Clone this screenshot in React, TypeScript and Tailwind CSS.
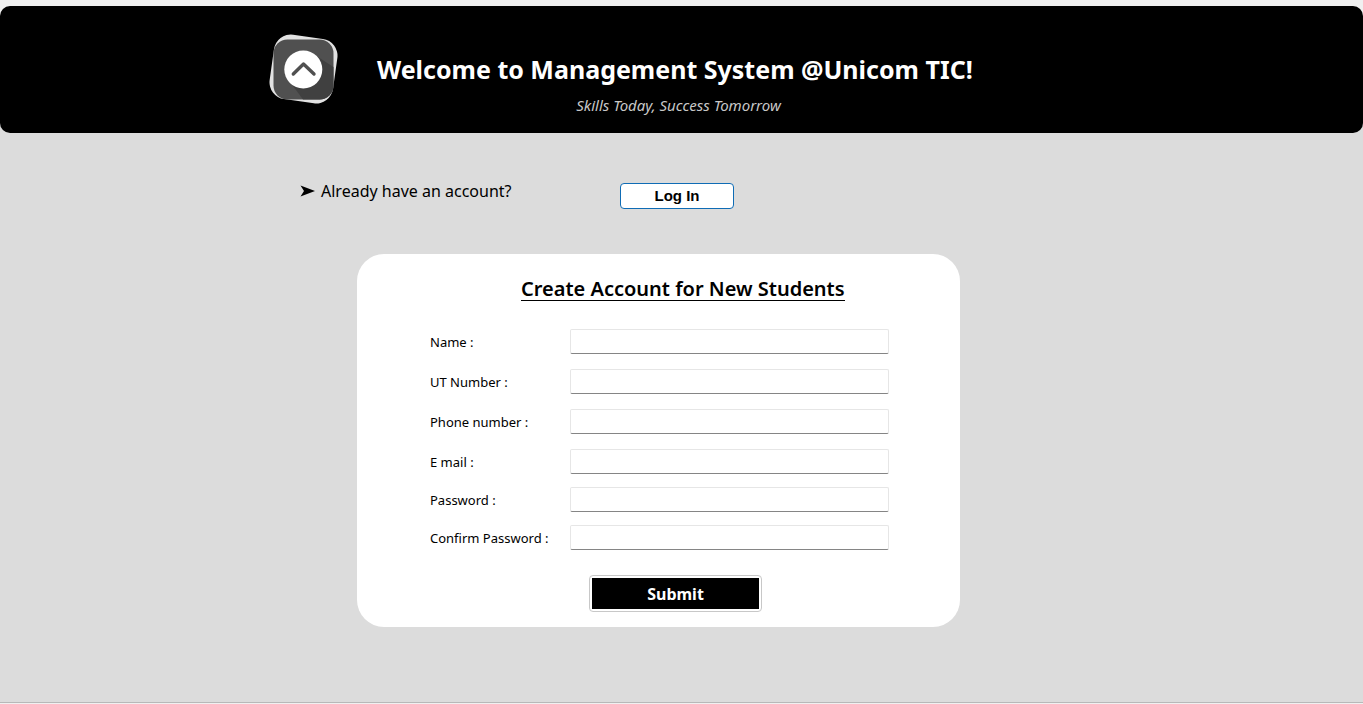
import React from "react";

type Field = { id: string; label: string; type: string };

const details: Field[] = [
  { id: "name", label: "Name :", type: "text" },
  { id: "ut-number", label: "UT Number :", type: "text" },
  { id: "phone", label: "Phone number :", type: "tel" },
  { id: "email", label: "E mail :", type: "email" },
];

const credentials: Field[] = [
  { id: "password", label: "Password :", type: "password" },
  { id: "confirm-password", label: "Confirm Password :", type: "password" },
];

function Logo() {
  return (
    <svg className="h-[70px] w-[70px] shrink-0" viewBox="0 0 70 70" aria-hidden="true">
      <rect x="2.500" y="2.500" width="64" height="65" rx="17" fill="#e2e2e2" transform="rotate(8 34.5 35)" />
      <rect x="4.500" y="5.500" width="60" height="60" rx="14" fill="#505050" />
      <path d="M47.500 22 L64.500 33 V51.500 A14 14 0 0 1 50.500 65.500 H34 L21 48 Z" fill="#404040" />
      <circle cx="34.300" cy="35.500" r="19" fill="#fff" />
      <path d="M24.300 40 L34.500 30 L45 40" fill="none" stroke="#505050" strokeWidth="3.400" strokeLinecap="round" strokeLinejoin="round" />
    </svg>
  );
}

function FieldRow({ field }: { field: Field }) {
  return (
    <div className="flex items-center">
      <label htmlFor={field.id} className="w-[140px] shrink-0 text-[13px] leading-5">
        {field.label}
      </label>
      <input
        id={field.id}
        type={field.type}
        className="h-[25px] min-w-0 flex-1 rounded-[2px] border border-[#e6e6e6] border-b-[#858585] bg-white px-1 text-[13px] outline-none"
      />
    </div>
  );
}

export default function App() {
  return (
    <div className="flex min-h-screen flex-col bg-[#f0f0f0] pt-1.5 font-['Noto_Sans','Open_Sans',sans-serif] text-black">
      <div className="mb-px flex flex-1 flex-col border-b border-[#b8b8b8] bg-[#dcdcdc]">
        <div className="bg-[linear-gradient(#f0f0f0_50%,#dcdcdc_50%)]">
          <header className="rounded-[10px] bg-black pt-7 pb-[18px]">
            <div className="mx-auto flex max-w-[825px] items-start">
              <Logo />
              <div className="ml-[38px] flex w-[603px] flex-col pt-5">
                <h1 className="text-[25px] leading-[30px] font-bold whitespace-nowrap text-white">
                  Welcome to Management System @Unicom TIC!
                </h1>
                <p className="mt-[11px] text-center text-[15px] leading-5 text-[#c8c8c8] italic">
                  Skills Today, Success Tomorrow
                </p>
              </div>
            </div>
          </header>
        </div>

        <main className="mx-auto w-full max-w-[825px] pt-[47px] pb-10">
          <div className="flex items-start pl-[31px]">
            <p className="flex w-[320px] items-center gap-1.5 text-[16px] leading-[22px]">
              <svg className="h-3 w-[15px]" viewBox="0 0 15 12" aria-hidden="true">
                <path d="M0.500 0.500 L15 6 L0.500 11.500 L4 6 Z" fill="#000" />
              </svg>
              Already have an account?
            </p>
            <button
              type="button"
              className="mt-[3px] h-[26px] w-[114px] rounded-[4px] border border-[#0f6cb5] bg-white text-[15px] leading-5 font-bold font-['Liberation_Sans',Arial,sans-serif]"
            >
              Log In
            </button>
          </div>

          <form
            className="mt-[45px] ml-[88px] max-w-[603px] rounded-[27px] bg-white pt-6 pr-[71px] pb-[15px] pl-[73px]"
            onSubmit={(e) => e.preventDefault()}
          >
            <h2 className="ml-[91px] w-fit border-b border-black text-[20px] leading-[22px] font-semibold whitespace-nowrap">
              Create Account for New Students
            </h2>
            <div className="mt-7 flex flex-col gap-[15px]">
              {details.map((f) => (
                <FieldRow key={f.id} field={f} />
              ))}
            </div>
            <div className="mt-[13px] flex flex-col gap-[13px]">
              {credentials.map((f) => (
                <FieldRow key={f.id} field={f} />
              ))}
            </div>
            <button
              type="submit"
              className="mt-[25px] ml-[159px] block h-[37px] w-[173px] rounded-[4px] border border-[#c8c8c8] bg-white p-0.5"
            >
              <span className="flex h-full items-center justify-center bg-black text-[16px] font-bold text-white">
                Submit
              </span>
            </button>
          </form>
        </main>
      </div>
    </div>
  );
}
